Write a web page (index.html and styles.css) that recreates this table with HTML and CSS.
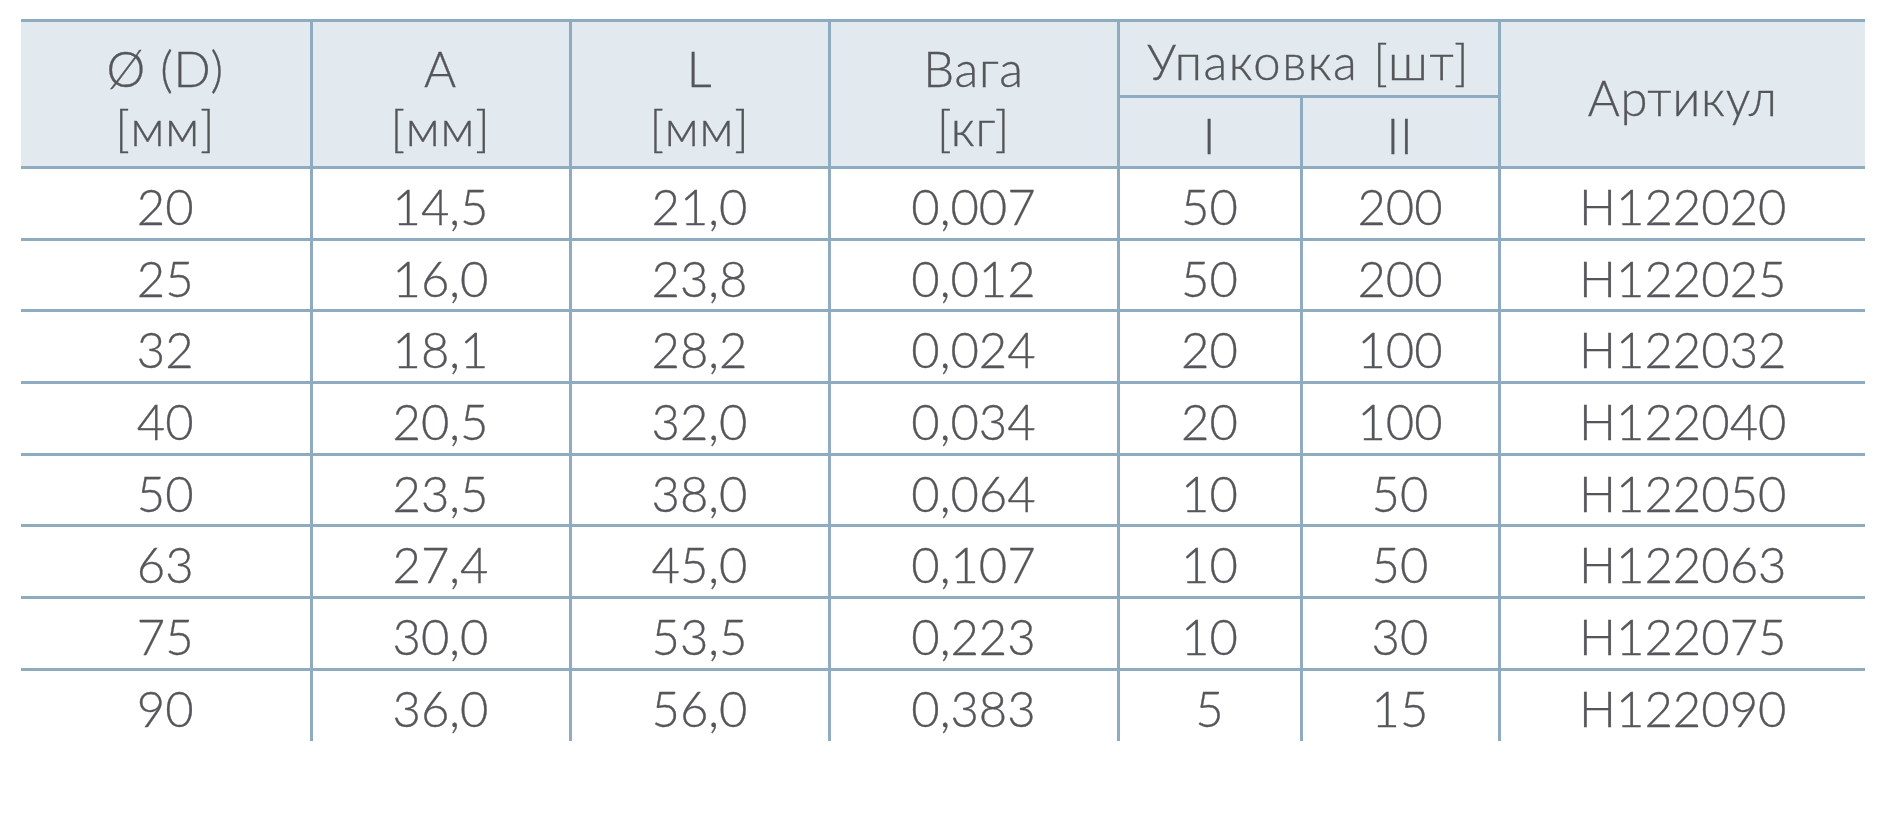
FILE: index.html
```html
<!DOCTYPE html>
<html lang="uk">
<head>
<meta charset="utf-8">
<title>Таблиця розмірів</title>
<link rel="stylesheet" href="styles.css">
</head>
<body>
<div class="wrap">
<table class="spec">
  <colgroup>
    <col class="c-d">
    <col class="c-a">
    <col class="c-l">
    <col class="c-w">
    <col class="c-p1">
    <col class="c-p2">
    <col class="c-art">
  </colgroup>
  <thead>
    <tr class="h1">
      <th rowspan="2" class="two">Ø (D)<br>[мм]</th>
      <th rowspan="2" class="two">A<br>[мм]</th>
      <th rowspan="2" class="two">L<br>[мм]</th>
      <th rowspan="2" class="two">Вага<br>[кг]</th>
      <th colspan="2" class="pack">Упаковка [шт]</th>
      <th rowspan="2" class="art">Артикул</th>
    </tr>
    <tr class="h2">
      <th>I</th>
      <th>II</th>
    </tr>
  </thead>
  <tbody>
    <tr><td>20</td><td>14,5</td><td>21,0</td><td>0,007</td><td>50</td><td>200</td><td>H122020</td></tr>
    <tr><td>25</td><td>16,0</td><td>23,8</td><td>0,012</td><td>50</td><td>200</td><td>H122025</td></tr>
    <tr><td>32</td><td>18,1</td><td>28,2</td><td>0,024</td><td>20</td><td>100</td><td>H122032</td></tr>
    <tr><td>40</td><td>20,5</td><td>32,0</td><td>0,034</td><td>20</td><td>100</td><td>H122040</td></tr>
    <tr><td>50</td><td>23,5</td><td>38,0</td><td>0,064</td><td>10</td><td>50</td><td>H122050</td></tr>
    <tr><td>63</td><td>27,4</td><td>45,0</td><td>0,107</td><td>10</td><td>50</td><td>H122063</td></tr>
    <tr><td>75</td><td>30,0</td><td>53,5</td><td>0,223</td><td>10</td><td>30</td><td>H122075</td></tr>
    <tr><td>90</td><td>36,0</td><td>56,0</td><td>0,383</td><td>5</td><td>15</td><td>H122090</td></tr>
  </tbody>
</table>
</div>
</body>
</html>
```
FILE: styles.css
```css
html, body {
  margin: 0;
  padding: 0;
  background: #ffffff;
}

.wrap {
  padding: 19px 17px 0 21px;
}

.spec {
  width: 1844px;
  table-layout: fixed;
  border-collapse: collapse;
  font-family: Lato, "Open Sans", "Noto Sans", sans-serif;
  font-weight: 300;
  font-size: 49px;
  color: #55565a;
  -webkit-text-stroke: 0.35px #55565a;
  text-align: center;
}

.c-d { width: 290px; }
.c-a { width: 259px; }
.c-l { width: 259px; }
.c-w { width: 289px; }
.c-p1 { width: 183px; }
.c-p2 { width: 198px; }
.c-art { width: 366px; }

.spec th,
.spec td {
  padding: 6px 0 0;
  border: 3px solid #8fabbf;
  vertical-align: middle;
  font-weight: 300;
}

.spec th {
  background: #e2eaef;
  line-height: 57px;
  letter-spacing: 0.8px;
}

.spec th.two {
  line-height: 59px;
  padding-top: 8px;
}

.spec th.pack {
  letter-spacing: 1.6px;
}

.spec tr > :first-child { border-left: none; }
.spec tr > :last-child { border-right: none; }
.spec .h2 > :first-child { border-left: 3px solid #8fabbf; }
.spec .h2 > :last-child { border-right: 3px solid #8fabbf; }

.spec .h1 { height: 76px; }
.spec .h2 { height: 71px; }

.spec tbody tr { height: 71.7px; }
.spec td { line-height: 1; }
.spec tbody tr:last-child td { border-bottom: none; }
```
